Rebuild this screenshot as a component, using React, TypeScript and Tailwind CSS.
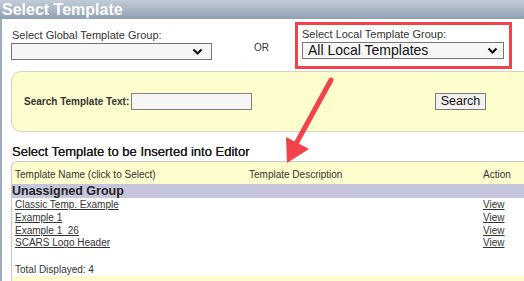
import React from 'react';

const rows = ['Classic Temp. Example', 'Example 1', 'Example 1_26', 'SCARS Logo Header'];

const Chevron = () => (
  <svg width="11" height="8" viewBox="0 0 11 8" className="shrink-0">
    <path d="M1.5 1.5 L5.5 5.5 L9.5 1.5" fill="none" stroke="#111" strokeWidth="2.2" />
  </svg>
);

export default function App() {
  return (
    <div className="relative w-[524px] h-[281px] overflow-hidden bg-white font-['Liberation_Sans',Arial,sans-serif] text-[#222]">
      {/* title bar */}
      <div className="h-[19px] bg-gradient-to-b from-[#c3cdd8] to-[#8fa0b4] pl-[2px] text-[16px] leading-[19px] font-bold text-white">
        Select Template
      </div>

      <div className="border-l-2 border-[#9dacbc] pl-[9px] h-[262px] flex flex-col">
        {/* group selects */}
        <div className="flex items-start h-[52px]">
          <div className="flex flex-col pt-[10px] w-[201px]">
            <span className="text-[11px] leading-[12px] pl-px text-[#333]">Select Global Template Group:</span>
            <div className="mt-[2px] h-[17px] border border-[#767676] bg-[#f6f6f6] flex items-center justify-end pr-[8px]">
              <Chevron />
            </div>
          </div>
          <span className="ml-[42px] mt-[21px] text-[10px] text-[#333]">OR</span>
          <div className="ml-[26px] mt-[3px] w-[217px] h-[47px] border-[3px] border-[#f2424a] px-[4px] pt-[3px]">
            <span className="block text-[11px] leading-[12px] text-[#333]">Select Local Template Group:</span>
            <div className="mt-[2px] h-[17px] w-[202px] border border-[#767676] bg-[#f6f6f6] flex items-center justify-between pl-[5px] pr-[5px]">
              <span className="text-[14px] leading-[15px] text-[#111]">All Local Templates</span>
              <Chevron />
            </div>
          </div>
        </div>

        {/* search box */}
        <div className="h-[62px] -mr-[20px] rounded-l-[10px] border border-[#d3d3c4] bg-[#fefdcd] flex items-center pl-[12px]">
          <span className="w-[107px] whitespace-nowrap text-[10px] font-bold text-[#333]">Search Template Text:</span>
          <div className="w-[121px] h-[17px] border border-[#7f7f7f] bg-[#f6f6f6]" />
          <button className="ml-[183px] w-[51px] h-[17px] border border-[#7a7a7a] bg-[#f2f2f2] text-[12.5px] leading-[14px] text-[#111]">
            Search
          </button>
        </div>

        <div className="mt-[12px] pl-px text-[13px] leading-[15px] text-[#1a1a1a] [text-shadow:0_0_0.3px_#1a1a1a]">Select Template to be Inserted into Editor</div>

        {/* table */}
        <div className="mt-[2px] -mr-[20px] flex-1 border-l border-t border-[#c9c9c9] rounded-tl-[6px] flex flex-col text-[10px] text-[#333]">
          <div className="h-[22px] bg-[#fefdcd] rounded-tl-[6px] flex items-end pb-[2px] pl-[3px]">
            <span className="w-[234px]">Template Name (click to Select)</span>
            <span className="w-[234px]">Template Description</span>
            <span>Action</span>
          </div>
          <div className="h-[14px] bg-[#c5c5dc] text-[12.5px] leading-[14px] font-bold text-[#222]">Unassigned Group</div>
          <div className="pt-[1px]">
            {rows.map((r) => (
              <div key={r} className="h-[12.7px] leading-[12.7px] flex pl-[3px]">
                <span className="w-[468px] underline">{r}</span>
                <span className="underline">View</span>
              </div>
            ))}
          </div>
          <div className="mt-[14px] pl-[3px] leading-[12px]">Total Displayed: 4</div>
          <div className="mt-auto h-[5px] bg-[#fefdcd]" />
        </div>
      </div>

      {/* annotation arrow */}
      <svg className="absolute left-0 top-0" width="524" height="281" viewBox="0 0 524 281">
        <line x1="331" y1="80" x2="297" y2="142" stroke="#f2424a" strokeWidth="5" strokeLinecap="round" />
        <polygon points="287,163 286,137 309,149" fill="#f2424a" />
      </svg>
    </div>
  );
}
